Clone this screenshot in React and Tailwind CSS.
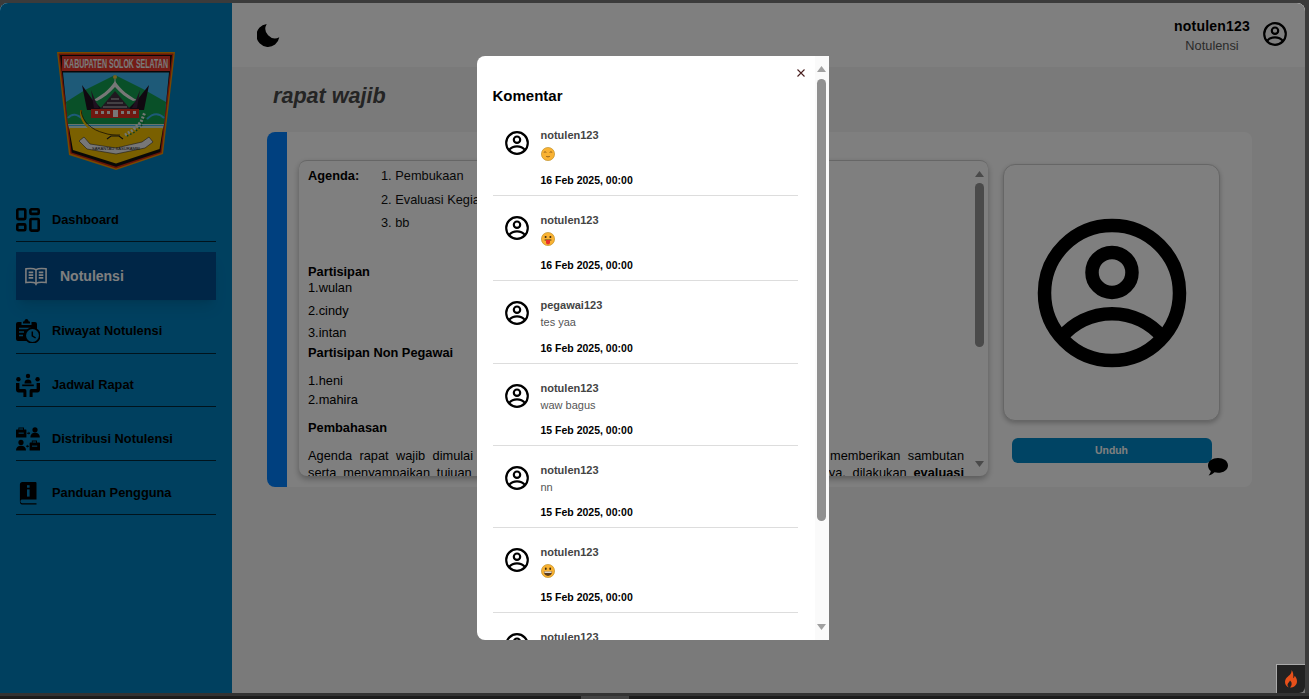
const SB = "#0180bf";

function UserIcon({ className = "" }) {
  return (
    <svg viewBox="0 0 24 24" fill="none" stroke="currentColor" strokeWidth="2.16" className={className}>
      <circle cx="12" cy="12" r="10.8" />
      <circle cx="12" cy="8.7" r="3.2" />
      <path d="M4 19A10.5 10.5 0 0 1 20 19" />
    </svg>
  );
}

function DashIcon() {
  return (
    <svg viewBox="0 0 24 24" fill="none" stroke="#000" strokeWidth="2.6" className="w-6 h-6 shrink-0">
      <rect x="1.3" y="1.3" width="8" height="9.8" rx="1" />
      <rect x="14.4" y="1.3" width="8.3" height="4.6" rx="1" />
      <rect x="1.3" y="16.4" width="8" height="5.8" rx="1" />
      <rect x="14.4" y="11" width="8.3" height="11.6" rx="1" />
    </svg>
  );
}

function BookIcon() {
  return (
    <svg viewBox="0 0 24 20" fill="none" stroke="#fff" strokeWidth="1.7" className="ml-px h-[19px] w-[22px] shrink-0">
      <path d="M12 2.5C10 1.3 5 1 1 1.6V16.6C5 16 10 16.3 12 17.5C14 16.3 19 16 23 16.6V1.6C19 1 14 1.3 12 2.5Z" />
      <path d="M12 2.5V19.5" />
      <path d="M4 5.5H9M4 8.5H9M4 11.5H9M15 5.5H20M15 8.5H20M15 11.5H20" />
    </svg>
  );
}

function HistoryIcon() {
  return (
    <svg viewBox="0 0 24 24" className="w-6 h-6 shrink-0">
      <path d="M7 2.5H8.2C8.6 .8 9.6 0 10.5 0S12.4 .8 12.8 2.5H14V4.5H7Z" fill="#000" />
      <path d="M2 3H5.5V6H15.5V3H19A2 2 0 0 1 21 5V20A2 2 0 0 1 19 22H2A2 2 0 0 1 0 20V5A2 2 0 0 1 2 3Z" fill="#000" />
      <path d="M3 9.5H15M3 13H8M3 16.5H7" stroke={SB} strokeWidth="1.6" />
      <circle cx="16.5" cy="16.5" r="7.3" fill={SB} stroke="#000" strokeWidth="1.7" />
      <path d="M16.3 12.5V16.8L19.6 19" fill="none" stroke="#000" strokeWidth="1.5" />
    </svg>
  );
}

function MeetingIcon() {
  return (
    <svg viewBox="0 0 24 24" className="w-6 h-6 shrink-0" fill="#000">
      <circle cx="12" cy="3" r="2.2" />
      <circle cx="2.4" cy="6.2" r="2.2" />
      <circle cx="21.6" cy="6.2" r="2.2" />
      <path d="M8.5 10.5C8.5 7.5 10 6.6 12 6.6S15.5 7.5 15.5 10.5Z" />
      <rect x="6.2" y="11.5" width="11.6" height="1.7" />
      <path d="M0 10H3.4V16H8.6C9.8 16 10.4 16.8 10.4 18V24H7.4V19.4H2.6C1 19.4 0 18.4 0 16.8Z" />
      <path d="M24 10H20.6V16H15.4C14.2 16 13.6 16.8 13.6 18V24H16.6V19.4H21.4C23 19.4 24 18.4 24 16.8Z" />
    </svg>
  );
}

function DistIcon() {
  return (
    <svg viewBox="0 0 24 24" className="w-6 h-6 shrink-0" fill="#000">
      <path d="M3.2 2.5H7V1.4H3.2ZM2.4 2.5V.4H8V2.5H10A.6.6 0 0 1 10.4 3V10.4H0V3A.6.6 0 0 1 .6 2.5Z" fillRule="evenodd" />
      <rect x="2.6" y="5.6" width="5.2" height="1.1" fill={SB} />
      <circle cx="19" cy="2.8" r="2.6" />
      <path d="M14.4 10.4C14.4 7 16.6 5.8 19 5.8S23.8 7 23.8 10.4Z" />
      <path d="M11 5.8H12.6V4.6L14.2 6.2L12.6 7.8V6.8H11Z" />
      <circle cx="5" cy="15.4" r="2.6" />
      <path d="M0 23.6C0 20 2.6 18.7 5 18.7S10 20 10 23.6Z" />
      <path d="M13 18.8H11.6V17.6L10 19.2L11.6 20.8V19.8H13Z" />
      <path d="M16.6 15.6H20V14.4H16.6ZM15.8 15.6V13.4H21V15.6H23.4A.6.6 0 0 1 24 16.2V23.6H13.6V16.2A.6.6 0 0 1 14.2 15.6Z" fillRule="evenodd" />
      <rect x="16" y="18.6" width="5.2" height="1.1" fill={SB} />
    </svg>
  );
}

function GuideIcon() {
  return (
    <svg viewBox="0 0 24 24" className="w-6 h-6 shrink-0">
      <path d="M6.4 1H19.6A.9.9 0 0 1 20.5 1.9V18.4H6.2C5.4 18.4 4.4 19 4.4 20.3S5.4 22.2 6.2 22.2H20.5V23.4H6.2C4.4 23.4 3.9 21.8 3.9 20.5V3.6C3.9 2 4.9 1 6.4 1Z" fill="#000" />
      <rect x="11" y="4.2" width="2.6" height="2.5" fill={SB} />
      <rect x="11" y="8.4" width="2.6" height="7.2" fill={SB} />
    </svg>
  );
}

function Logo() {
  return (
    <svg viewBox="0 0 118 118" className="w-[118px] h-[118px]">
      <polygon points="0,0 118,0 106,102 59,118 12,103" fill="#f09000" />
      <polygon points="1.5,1.5 116.5,1.5 104.6,101 59,116.4 13.4,101.6" fill="#d02a10" />
      <polygon points="3,3 115,3 103.4,100 59,114.8 14.6,100.6" fill="#111" />
      <rect x="5" y="4" width="108" height="15" fill="#e8382c" />
      <text x="59" y="16" textAnchor="middle" fontSize="13" fontWeight="700" fill="#f4f4f4" textLength="104" lengthAdjust="spacingAndGlyphs" fontFamily="'Liberation Sans', sans-serif">KABUPATEN SOLOK SELATAN</text>
      <polygon points="6,20.5 112,20.5 107,72 11,72" fill="#3cb4f0" />
      <polygon points="9,50 28,38 58,23 86,37 109,50 107,72 11,72" fill="#12a050" />
      <circle cx="58" cy="25" r="2" fill="#e8c040" />
      <path d="M58 27V33" stroke="#e8e8e8" strokeWidth="1" />
      <path d="M36 48C44 44 52 38 58 29C64 38 72 44 80 48L76 49C70 46 63 41 58 35C53 41 46 46 40 49Z" fill="#eee" />
      <path d="M25 33L30 58H46L35 47Z M92 33L87 58H70L81 47Z" fill="#201020" />
      <path d="M34 38L37 56H42L38 48Z M83 38L80 56H75L79 48Z" fill="#402040" />
      <path d="M42 58L58 39L74 58Z" fill="#403040" />
      <path d="M46 55H70M50 51H66M54 47H62" stroke="#ccc" strokeWidth="1" />
      <rect x="34" y="57" width="48" height="9" fill="#e03020" />
      <g fill="#eee">
        <rect x="38" y="59" width="3" height="3" />
        <rect x="44" y="59" width="3" height="3" />
        <rect x="50" y="59" width="3" height="3" />
        <rect x="56" y="58" width="5" height="7" />
        <rect x="64" y="59" width="3" height="3" />
        <rect x="70" y="59" width="3" height="3" />
        <rect x="76" y="59" width="3" height="3" />
      </g>
      <path d="M11 66C15 61 20 62 26 67M90 67C96 61 102 61 107 66" fill="none" stroke="#3cb4f0" strokeWidth="2" />
      <path d="M11 72H107L106 77H12Z" fill="#cfe8d8" />
      <path d="M11 73.500H107" stroke="#3cb4f0" strokeWidth="1" />
      <polygon points="12,76 106,76 102.5,97 59,111.5 16,98" fill="#f5c000" />
      <path d="M24 58C23 70 33 80 47 83C52 85 58 85 63 84" fill="none" stroke="#f5c000" strokeWidth="2" />
      <path d="M24 58C25 70 35 78 47 81C52 83 58 83 63 83" fill="none" stroke="#302000" strokeWidth=".8" />
      <path d="M50 87L54 84H62L66 87M54 84H62" fill="none" stroke="#222" strokeWidth="1.2" />
      <path d="M68 83L76 78L84 70L88 60" fill="none" stroke="#e8f0e8" strokeWidth="3" strokeDasharray="2 1.5" />
      <path d="M70 84L78 80L86 72L90 62" fill="none" stroke="#108040" strokeWidth="1.5" strokeDasharray="1.5 2" />
      <path d="M22 89L27 85L33 92L59 96L85 90L92 85L96 90L88 96L59 102L30 97Z" fill="#eee" stroke="#333" strokeWidth=".6" />
      <text x="59" y="98" textAnchor="middle" fontSize="4.4" fill="#222" textLength="48" lengthAdjust="spacingAndGlyphs" fontFamily="'Liberation Sans', sans-serif">SARANTAU SASURAMBI</text>
    </svg>
  );
}

function Emoji({ kind }) {
  return (
    <svg viewBox="0 0 14 14" className="w-[14px] h-[14px]">
      <circle cx="7" cy="7" r="6.6" fill="#f9b233" stroke="#b98a20" strokeWidth=".6" />
      {kind === "kiss" && (
        <g fill="none" stroke="#7a4a10" strokeWidth=".8">
          <path d="M2.8 5.4Q4 4.2 5.4 5.4M8.6 5.4Q10 4.2 11.2 5.4" />
          <path d="M5.2 9.4Q7 10.4 8.8 9.4" />
        </g>
      )}
      {kind === "tongue" && (
        <g>
          <circle cx="4.6" cy="5" r="1" fill="#3a2a10" />
          <circle cx="9.4" cy="5" r="1" fill="#3a2a10" />
          <path d="M3.6 8H10.4" stroke="#3a2a10" strokeWidth=".9" />
          <path d="M5 8H9V10.4A2 2 0 0 1 5 10.4Z" fill="#e8302a" />
        </g>
      )}
      {kind === "grin" && (
        <g>
          <ellipse cx="4.8" cy="4.8" rx=".9" ry="1.3" fill="#3a2a10" />
          <ellipse cx="9.2" cy="4.8" rx=".9" ry="1.3" fill="#3a2a10" />
          <path d="M2.8 7.6H11.2C11.2 10.4 9.2 12 7 12S2.8 10.4 2.8 7.6Z" fill="#5a3a18" />
          <path d="M3.4 7.6H10.6V8.8H3.4Z" fill="#fff" />
        </g>
      )}
    </svg>
  );
}

const comments = [
  { name: "notulen123", emoji: "kiss", date: "16 Feb 2025, 00:00", gap: "mt-[13px]" },
  { name: "notulen123", emoji: "tongue", date: "16 Feb 2025, 00:00", gap: "mt-[13px]" },
  { name: "pegawai123", text: "tes yaa", date: "16 Feb 2025, 00:00", gap: "mt-[13px]" },
  { name: "notulen123", text: "waw bagus", date: "15 Feb 2025, 00:00", gap: "mt-[12px]" },
  { name: "notulen123", text: "nn", date: "15 Feb 2025, 00:00", gap: "mt-[12px]" },
  { name: "notulen123", emoji: "grin", date: "15 Feb 2025, 00:00", gap: "mt-[13px]" },
  { name: "notulen123", text: "mantap", date: "15 Feb 2025, 00:00", gap: "mt-[12px]" },
];

const navRest = [
  { label: "Riwayat Notulensi", icon: <HistoryIcon /> },
  { label: "Jadwal Rapat", icon: <MeetingIcon /> },
  { label: "Distribusi Notulensi", icon: <DistIcon /> },
  { label: "Panduan Pengguna", icon: <GuideIcon /> },
];

function NavRow({ label, icon, h }) {
  return (
    <div className={`flex items-center gap-3 border-b border-black/70 ${h}`}>
      {icon}
      <span className="text-[12.8px] font-bold text-black">{label}</span>
    </div>
  );
}

function Arrow({ up, className = "" }) {
  return (
    <svg viewBox="0 0 9 6" className={`w-[9px] h-[6px] ${className}`}>
      <polygon points={up ? "4.5,0 9,6 0,6" : "0,0 9,0 4.5,6"} fill="currentColor" />
    </svg>
  );
}

export default function App() {
  return (
    <div className="w-[1309px] h-[699px] overflow-hidden bg-[#3b3b3b] pt-[3px] font-['Liberation_Sans',Arial,sans-serif]">
      <div className="relative mr-[4px] flex h-[690px] overflow-hidden rounded-t-lg bg-[#f4f4f4]">
        {/* Sidebar */}
        <aside className="flex w-[232px] shrink-0 flex-col bg-[#0180bf] px-4">
          <div className="flex justify-center pt-[49px]">
            <Logo />
          </div>
          <nav className="mt-[21px] flex flex-col">
            <NavRow label="Dashboard" icon={<DashIcon />} h="h-[51px] pt-[7px]" />
            <div className="mt-[10px] flex h-[48px] items-center gap-[13px] bg-[#004c8e] px-2 shadow-lg">
              <BookIcon />
              <span className="text-[14px] font-bold text-white">Notulensi</span>
            </div>
            <NavRow label={navRest[0].label} icon={navRest[0].icon} h="h-[54px] pt-[9px]" />
            <NavRow label={navRest[1].label} icon={navRest[1].icon} h="h-[53px] pt-[9px]" />
            <NavRow label={navRest[2].label} icon={navRest[2].icon} h="h-[54px] pt-[10px]" />
            <NavRow label={navRest[3].label} icon={navRest[3].icon} h="h-[54px] pt-[10px]" />
          </nav>
        </aside>

        {/* Main */}
        <main className="flex min-w-0 flex-1 flex-col">
          <header className="flex h-[64px] shrink-0 items-center justify-between bg-white pl-[25px] pr-[18px]">
            <svg viewBox="0 0 24 24" className="h-6 w-6">
              <path d="M9.7 1A11.5 11.5 0 1 0 22.3 14.3A9.6 9.6 0 0 1 9.7 1Z" fill="#000" />
            </svg>
            <div className="flex items-center gap-[13px]">
              <div className="flex flex-col items-center">
                <span className="text-[14px] font-bold leading-[16px] tracking-[0.2px] text-black">notulen123</span>
                <span className="mt-[4px] text-[12.8px] leading-[15px] text-[#555]">Notulensi</span>
              </div>
              <UserIcon className="-mt-[2px] h-6 w-6 text-black" />
            </div>
          </header>

          <div className="flex-1 pl-[35px]">
            <h1 className="pl-[6px] pt-[16px] text-[21.6px] font-bold italic leading-[26px] text-[#484848]">rapat wajib</h1>

            <section className="relative mt-[23px] flex h-[355px] w-[985px] rounded-lg bg-white">
              <div className="w-[20px] shrink-0 rounded-l-lg bg-[#0080ff]" />
              <div className="relative ml-[12px] mt-[28px] h-[316px] w-[689px] shrink-0 overflow-hidden rounded-lg border-t border-[#ccc] bg-white shadow-[0_3px_6px_rgba(0,0,0,0.3)]">
                <div className="pl-[9px] pr-[24px] pt-[7px] text-[12.8px] leading-[15px] text-black">
                  <div className="flex">
                    <span className="w-[73px] shrink-0 font-bold">Agenda:</span>
                    <div className="flex flex-col gap-[8.5px] text-[#111]">
                      <span>1. Pembukaan</span>
                      <span>2. Evaluasi Kegiatan</span>
                      <span>3. bb</span>
                    </div>
                  </div>
                  <p className="mt-[34px] font-bold">Partisipan</p>
                  <p className="mt-[1px]">1.wulan</p>
                  <p className="mt-[8px]">2.cindy</p>
                  <p className="mt-[7px]">3.intan</p>
                  <p className="mt-[5px] font-bold">Partisipan Non Pegawai</p>
                  <p className="mt-[13px]">1.heni</p>
                  <p className="mt-[4px]">2.mahira</p>
                  <p className="mt-[13px] font-bold">Pembahasan</p>
                  <div className="mt-[12px] leading-[17px]">
                    <p className="text-justify [text-align-last:justify]">Agenda rapat wajib dimulai dengan pembukaan oleh pimpinan rapat yang kemudian memberikan sambutan</p>
                    <p className="text-justify [text-align-last:justify]">serta menyampaikan tujuan diadakannya pertemuan hari ini kepada peserta. Selanjutnya. dilakukan <b>evaluasi</b></p>
                    <p className="text-justify">kegiatan sebelumnya secara menyeluruh oleh seluruh peserta rapat.</p>
                  </div>
                </div>
                {/* scrollbar */}
                <div className="absolute right-[4px] top-0 flex h-full w-[9px] flex-col items-center text-[#949494]">
                  <Arrow up className="mt-[10px]" />
                  <div className="mt-[6px] h-[164px] w-[9px] rounded-full bg-[#949494]" />
                  <Arrow className="mt-auto mb-[9px]" />
                </div>
              </div>

              <div className="ml-[15px] mt-[32px] flex w-[217px] shrink-0 flex-col items-center">
                <div className="flex h-[257px] w-full items-center justify-center rounded-xl border border-[#ccc] bg-white shadow-[0_2px_5px_rgba(0,0,0,0.25)]">
                  <UserIcon className="h-[150px] w-[150px] text-black" />
                </div>
                <button className="mt-[17px] h-[25px] w-[200px] rounded-md bg-[#0088c8] text-[10.4px] font-bold text-white">Unduh</button>
              </div>

              <svg viewBox="0 0 20 18" className="absolute left-[941px] top-[326px] h-[18px] w-[20px]">
                <path d="M10 0C15.5 0 20 3 20 7.4S15.5 14.8 10 14.8C8.8 14.8 7.6 14.6 6.5 14.3C5 15.6 3 17 .6 17.4C1.6 16.2 2.6 14.6 2.8 12.9C1 11.6 0 9.6 0 7.4C0 3 4.5 0 10 0Z" fill="#000" />
              </svg>
            </section>
          </div>
        </main>

        {/* Modal overlay */}
        <div className="absolute inset-0 flex items-center justify-center bg-black/50">
          <div className="relative flex h-[584px] w-[352px] overflow-hidden rounded-l-lg bg-white">
            <div className="min-w-0 flex-1 overflow-hidden pl-4 pr-[17px]">
              <h2 className="mt-[31px] text-[15px] font-bold leading-[18px] text-black">Komentar</h2>
              <ul className="mt-[6px]">
                {comments.map((c, i) => (
                  <li key={i} className="flex gap-3 border-b border-[#ddd] pb-[9px] pl-3 pt-[18px]">
                    <UserIcon className="mt-[2px] h-6 w-6 shrink-0 text-black" />
                    <div className="flex flex-col">
                      <span className="h-[13px] text-[11px] font-bold leading-[13px] text-[#444]">{c.name}</span>
                      {c.emoji ? (
                        <div className="mt-[5px] h-[14px]">
                          <Emoji kind={c.emoji} />
                        </div>
                      ) : (
                        <span className="mt-[4px] h-[13px] text-[11px] leading-[13px] text-[#555]">{c.text}</span>
                      )}
                      <span className={`${c.gap} h-[12px] text-[10.5px] font-bold leading-[12px] text-black`}>{c.date}</span>
                    </div>
                  </li>
                ))}
              </ul>
            </div>
            <svg viewBox="0 0 8 8" className="absolute right-[24px] top-[13px] h-2 w-2" fill="none" stroke="#4a2020" strokeWidth="1.1">
              <path d="M.5.5L7.5 7.5M7.5.5L.5 7.5" />
            </svg>
            <div className="flex w-[14px] shrink-0 flex-col items-center bg-[#fafafa] text-[#a0a0a0]">
              <Arrow up className="mt-[10px]" />
              <div className="mt-[7px] h-[442px] w-[9px] rounded-full bg-[#909090]" />
              <Arrow className="mt-auto mb-[10px]" />
            </div>
          </div>
        </div>

        {/* Debug toolbar badge */}
        <div className="absolute bottom-0 right-0 flex h-[29px] w-[29px] items-center justify-center rounded-br-md border-l border-t border-[#aaa] bg-[#222]">
          <svg viewBox="0 0 14 18" className="h-[18px] w-[14px]">
            <path d="M7.5 0C8 3 6 4.6 4 6.6C2.4 8 1 9.6 1 12C1 14.8 2.8 17 5 17.6C3.8 16.6 3.4 15.4 3.6 14.2C4 12.8 5.4 12 6 10.4C7.4 11.6 7.8 12.8 7.6 14.2C7.4 15.4 7 16.6 6 17.6C9.6 17.4 13 15.4 13 11.2C13 8.8 11.8 6.8 10.6 5.8C10.6 7 10 7.8 9.2 8.2C9.6 5 9.4 2 7.5 0Z" fill="#e8501a" />
          </svg>
        </div>
      </div>
      <div className="h-[3px] bg-[#333]" />
      <div className="flex h-[3px] bg-[#1c1c1c]">
        <div className="ml-[581px] w-[48px] bg-[#444]" />
      </div>
    </div>
  );
}
